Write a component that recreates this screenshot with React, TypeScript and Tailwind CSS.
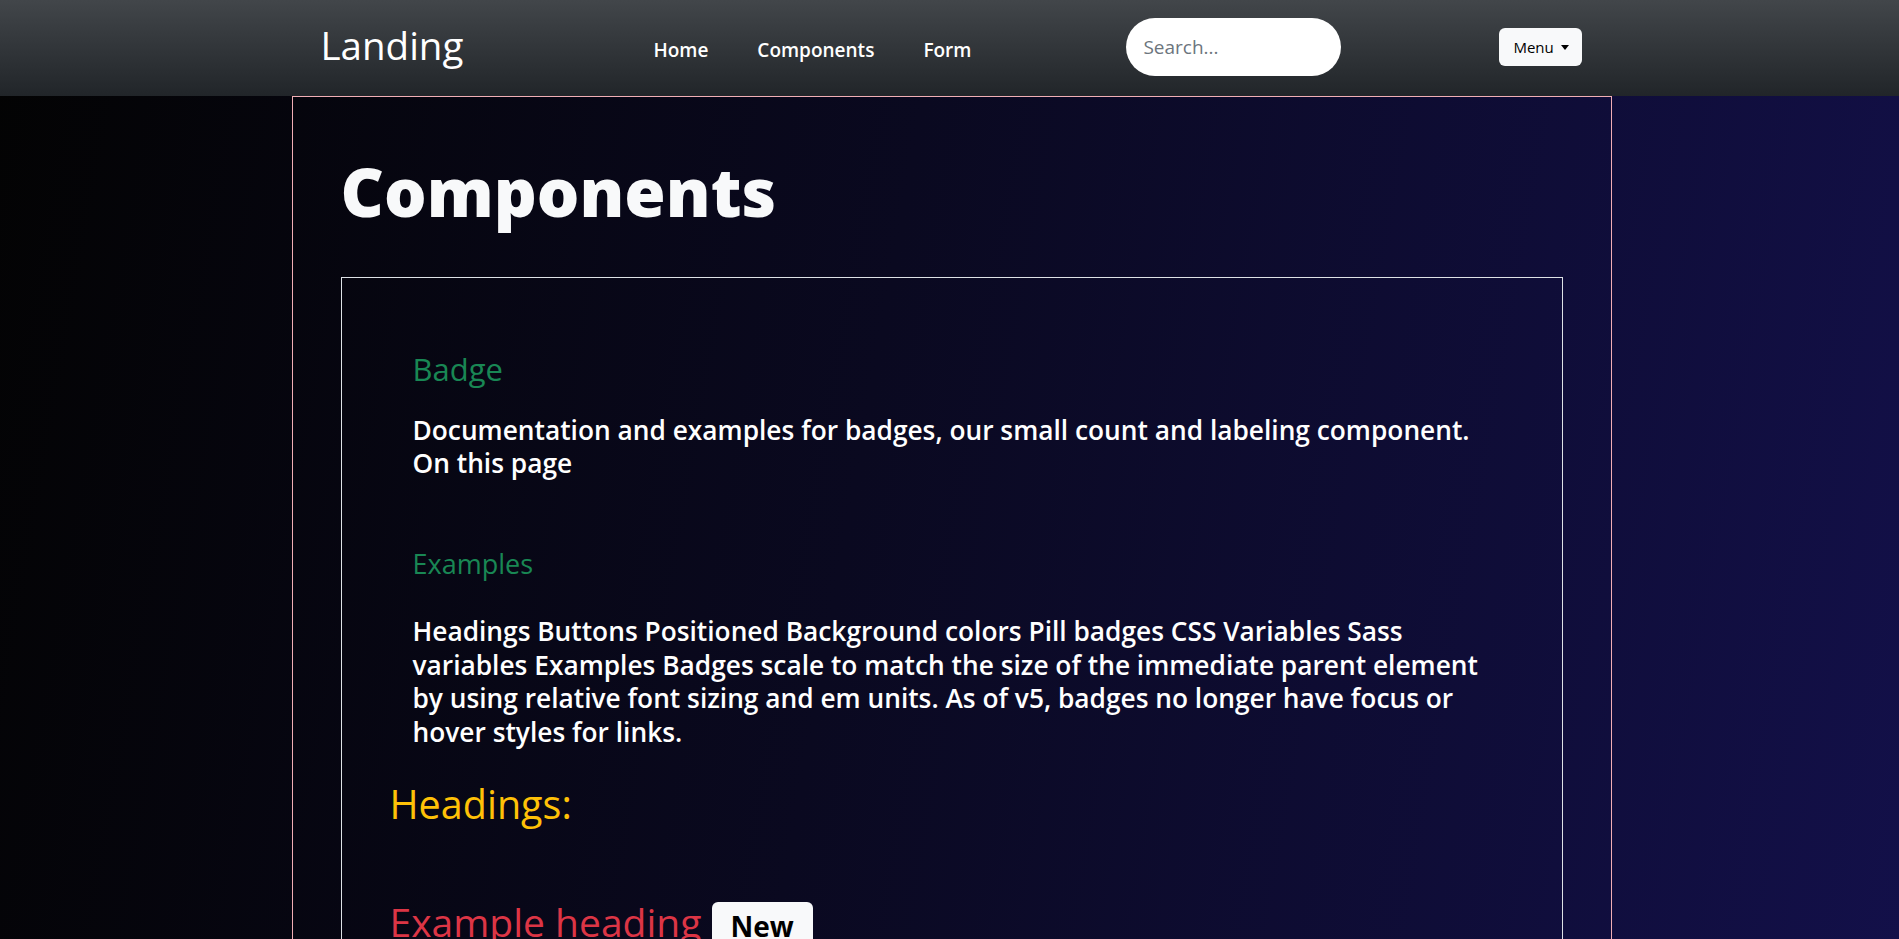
import { useState } from 'react'

const links = ['Home', 'Components', 'Form']

function Navbar() {
  const [query, setQuery] = useState('')

  return (
    <nav className="h-[96px] bg-[linear-gradient(180deg,#42464a,#212529)]">
      <div className="ml-[calc(50%-658px)] flex w-[1320px] items-start">
        <a href="#" className="ml-[29px] mt-[22px] text-[38.5px] leading-[46px] text-white">
          Landing
        </a>

        <ul className="ml-[190px] mt-[36px] flex gap-[49px] text-[19px] font-semibold leading-[28px] text-white">
          {links.map(link => (
            <li key={link}>
              <a href="#">{link}</a>
            </li>
          ))}
        </ul>

        <input
          value={query}
          onChange={e => setQuery(e.target.value)}
          placeholder="Search..."
          className="ml-[155px] mt-[18px] h-[58px] w-[215px] rounded-full bg-white pl-[17px] text-[19px] text-black outline-none placeholder:text-[#6c757d]"
        />

        <button className="ml-[158px] mt-[28px] flex h-[38px] w-[83px] items-center gap-[7px] rounded-[6px] bg-[#f8f9fa] pl-[14px] text-[15px] text-black">
          Menu
          <svg width="8" height="5" viewBox="0 0 8 5" className="mt-[1px]">
            <path d="M0 0h8L4 5z" fill="#000" />
          </svg>
        </button>
      </div>
    </nav>
  )
}

export default function App() {
  return (
    <div className="min-h-screen bg-[linear-gradient(100deg,#030303_0%,#0a0920_45%,#13104a_100%)] font-['Open_Sans','Noto_Sans',sans-serif] text-white">
      <Navbar />

      <main className="ml-[calc(50%-658px)] w-[1320px] border border-[#f1aeb5] px-12 pb-20 pt-[54px]">
        <h1 className="text-[67px] font-extrabold leading-[1.2] text-[#f8f9fa]">Components</h1>

        <div className="mt-[46px] border border-[#dee2e6] px-12 pb-16 pt-[73px]">
          <section className="ml-[23px] mr-[22px]">
            <h2 className="text-[31px] font-medium leading-[1.2] text-[#198754]">Badge</h2>
            <p className="mt-[25px] text-[26.3px] font-semibold leading-[33.6px]">
              Documentation and examples for badges, our small count and labeling component. On this page
            </p>

            <h3 className="mt-[67px] text-[27px] font-medium leading-[1.2] text-[#198754]">Examples</h3>
            <p className="mt-[35px] text-[26.3px] font-semibold leading-[33.6px]">
              Headings Buttons Positioned Background colors Pill badges CSS Variables Sass variables Examples
              Badges scale to match the size of the immediate parent element by using relative font sizing
              and em units. As of v5, badges no longer have focus or hover styles for links.
            </p>
          </section>

          <h2 className="mt-[31px] text-[39.5px] font-medium leading-[1.2] text-[#ffc107]">Headings:</h2>

          <h3 className="mt-[71px] text-[39px] font-medium leading-[1.2] text-[#dc3545]">
            Example heading{' '}
            <span className="inline-block rounded-[6px] bg-[#f8f9fa] px-[19px] py-[10px] align-baseline text-[28px] font-bold leading-none text-black">
              New
            </span>
          </h3>
        </div>
      </main>
    </div>
  )
}
